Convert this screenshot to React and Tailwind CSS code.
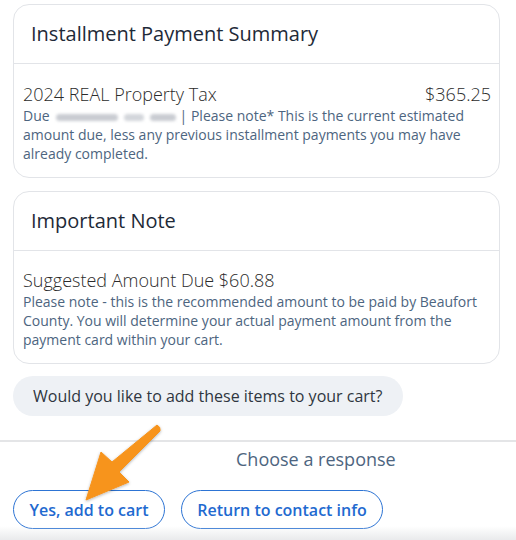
import React from "react";

function Card({ title, children, className = "" }) {
  return (
    <div className={"mx-[13px] w-[487px] rounded-2xl border border-[#e2e4e8] bg-white " + className}>
      <div className="flex h-[59px] items-center border-b border-[#e2e4e8] pl-[17px] text-[20px] text-[#1e2a38]">
        {title}
      </div>
      {children}
    </div>
  );
}

export default function App() {
  return (
    <div
      className="relative h-[540px] w-[516px] overflow-hidden bg-white"
      style={{ fontFamily: '"Open Sans", "Noto Sans", sans-serif' }}
    >
      <div className="pt-[4px]">
        <Card title="Installment Payment Summary">
          <div className="pl-[9px] pr-[8px] pt-[18px] pb-[14px]">
            <div className="flex justify-between text-[18px] font-light leading-[24px] text-[#2b2b2b]">
              <span>2024 REAL Property Tax</span>
              <span>$365.25</span>
            </div>
            <div className="text-[14px] leading-[19px] text-[#4d6580]">
              Due
              <span className="ml-[6px] mr-[4px] inline-flex items-center gap-[6px] align-middle">
                <span className="inline-block h-[7px] w-[62px] rounded-sm bg-[#c9ccd2] blur-[1.5px]" />
                <span className="inline-block h-[7px] w-[20px] rounded-sm bg-[#d3d6db] blur-[1.5px]" />
                <span className="inline-block h-[7px] w-[26px] rounded-sm bg-[#c9ccd2] blur-[1.5px]" />
              </span>
              | Please note* This is the current estimated amount due, less any previous installment payments you may have already completed.
            </div>
          </div>
        </Card>
        <Card title="Important Note" className="mt-[13px]">
          <div className="pl-[9px] pr-[8px] pt-[17px] pb-[14px]">
            <div className="text-[18px] font-light leading-[24px] text-[#2b2b2b]">
              Suggested Amount Due $60.88
            </div>
            <div className="text-[14px] leading-[19px] text-[#4d6580]">
              Please note - this is the recommended amount to be paid by Beaufort County. You will determine your actual payment amount from the payment card within your cart.
            </div>
          </div>
        </Card>
        <div className="ml-[13px] mt-[12px] flex h-[40px] w-[390px] items-center rounded-[20px] bg-[#eef1f5] pl-[20px] text-[16px] text-[#2f3640]">
          Would you like to add these items to your cart?
        </div>
        <div className="mt-[24px] h-[2px] w-full bg-[#e4e5e7]" />
        <div className="mt-[5px] pl-[236px] text-[18px] leading-[24px] text-[#4d6580]">
          Choose a response
        </div>
        <div className="mt-[19px] flex gap-[16px] pl-[13px]">
          <button className="h-[39px] w-[152px] rounded-full border border-[#2d74d4] text-[16px] font-semibold text-[#1f6ad0]">
            Yes, add to cart
          </button>
          <button className="h-[39px] w-[202px] rounded-full border border-[#2d74d4] text-[16px] font-semibold text-[#1f6ad0]">
            Return to contact info
          </button>
        </div>
      </div>
      <div className="pointer-events-none absolute bottom-0 left-0 h-[14px] w-full bg-gradient-to-b from-transparent to-[#e9eaec]" />
      <svg
        className="pointer-events-none absolute left-0 top-0"
        width="516"
        height="540"
        viewBox="0 0 516 540"
      >
        <defs>
          <filter id="sh" x="-20%" y="-20%" width="140%" height="140%">
            <feDropShadow dx="0" dy="1" stdDeviation="1.5" floodColor="#000" floodOpacity="0.3" />
          </filter>
        </defs>
        <path
          d="M157 425 Q161 427 160 431 L119 472 L129 482 L86 500 L101 452 L112 462 Z"
          fill="#f7941d"
          stroke="#f7941d"
          strokeWidth="1"
          strokeLinejoin="round"
          filter="url(#sh)"
        />
      </svg>
    </div>
  );
}
